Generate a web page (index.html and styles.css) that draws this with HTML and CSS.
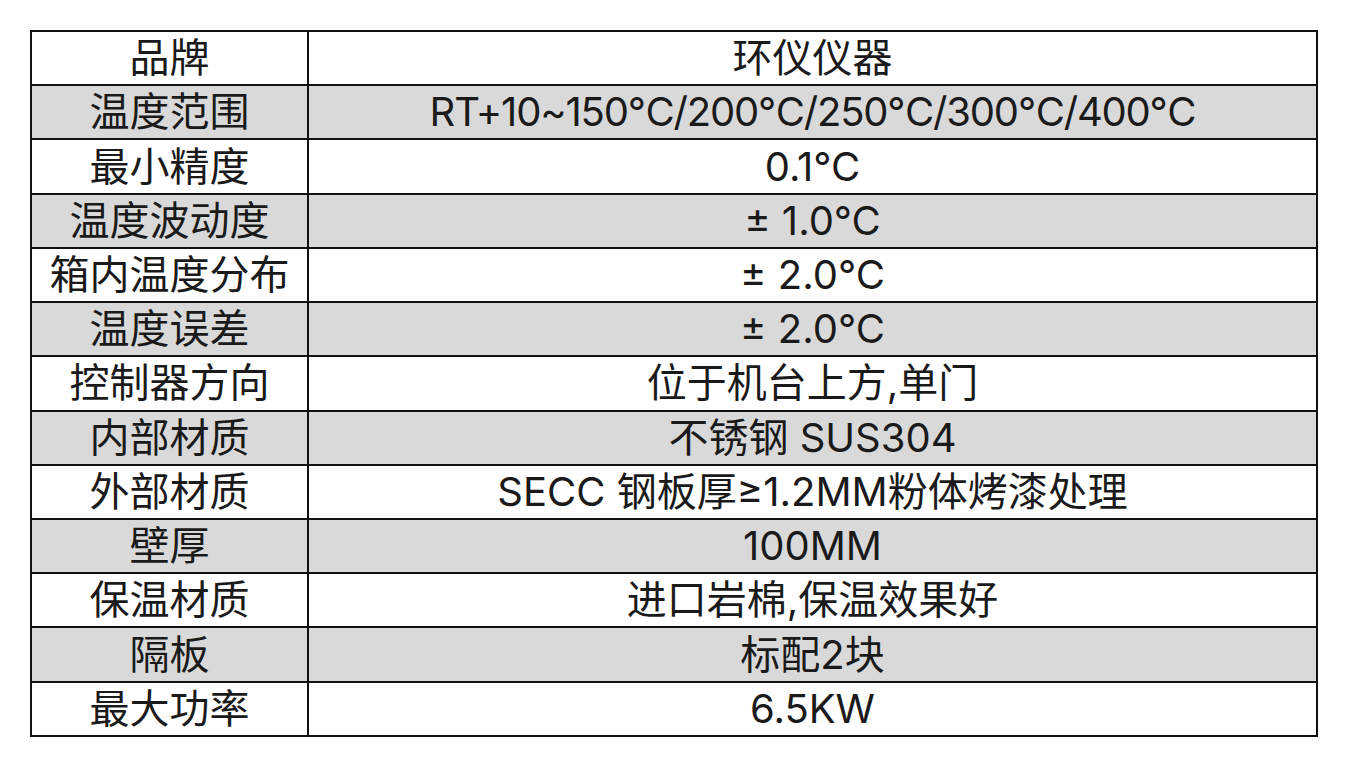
FILE: index.html
```html
<!DOCTYPE html>
<html lang="zh">
<head>
<meta charset="utf-8">
<link rel="stylesheet" href="styles.css">
</head>
<body>
<div class="page">
<table class="spec">
<tbody>
<tr><td class="k">品牌</td><td class="v">环仪仪器</td></tr>
<tr class="alt"><td class="k">温度范围</td><td class="v"><span class="lat">RT+10~150℃/200℃/250℃/300℃/400℃</span></td></tr>
<tr><td class="k">最小精度</td><td class="v">0.1℃</td></tr>
<tr class="alt"><td class="k">温度波动度</td><td class="v">± 1.0℃</td></tr>
<tr><td class="k">箱内温度分布</td><td class="v">± 2.0℃</td></tr>
<tr class="alt"><td class="k">温度误差</td><td class="v">± 2.0℃</td></tr>
<tr><td class="k">控制器方向</td><td class="v">位于机台上方,单门</td></tr>
<tr class="alt"><td class="k">内部材质</td><td class="v">不锈钢 SUS304</td></tr>
<tr><td class="k">外部材质</td><td class="v">SECC 钢板厚≥1.2MM粉体烤漆处理</td></tr>
<tr class="alt"><td class="k">壁厚</td><td class="v">100MM</td></tr>
<tr><td class="k">保温材质</td><td class="v">进口岩棉,保温效果好</td></tr>
<tr class="alt"><td class="k">隔板</td><td class="v">标配2块</td></tr>
<tr><td class="k">最大功率</td><td class="v">6.5KW</td></tr>
</tbody>
</table>
</div>
</body>
</html>
```
FILE: styles.css
```css
html, body {
  margin: 0;
  padding: 0;
  background: #ffffff;
}
.page {
  padding: 30px 0 0 30px;
}
.spec {
  border-collapse: collapse;
  width: 1288px;
  height: 707px;
  table-layout: fixed;
  font-family: "Inter", "Noto Sans CJK SC", sans-serif;
  font-size: 40px;
  color: #1a1a1a;
}
.spec td {
  border: 2px solid #111111;
  padding: 0;
  text-align: center;
  vertical-align: middle;
  line-height: 48px;
  white-space: nowrap;
}
.spec td.k {
  width: 275px;
}
.spec .lat {
  letter-spacing: -1.2px;
}
.spec tr.alt td {
  background: #d9d9d9;
}
```
